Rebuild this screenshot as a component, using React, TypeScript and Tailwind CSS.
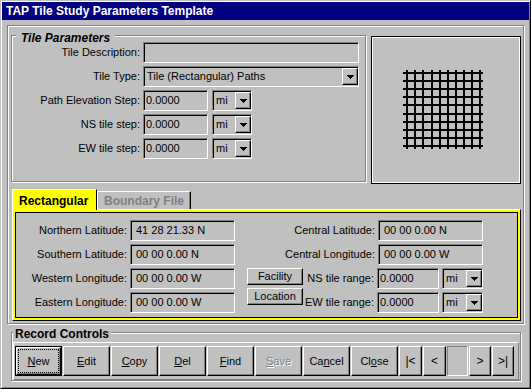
import React from 'react';

const RAISED =
  'border border-t-white border-l-white border-r-black border-b-black shadow-[inset_-1px_-1px_0_#808080]';
const SUNKEN =
  'border border-t-[#808080] border-l-[#808080] border-r-white border-b-white shadow-[inset_1px_1px_0_#000]';
const ETCHED = 'border border-[#808080] shadow-[1px_1px_0_#fff,inset_1px_1px_0_#fff]';

const DropArrow: React.FC = () => (
  <div className={`${RAISED} w-[16px] h-full bg-[#c0c0c0] flex items-center justify-center`}>
    <svg width="7" height="4" viewBox="0 0 7 4" shapeRendering="crispEdges">
      <polygon points="0,0 7,0 3.5,4" fill="#000" />
    </svg>
  </div>
);

const Select: React.FC<{ text: string; className: string }> = ({ text, className }) => (
  <div className={`${SUNKEN} ${className} shrink-0 h-[21px] bg-[#c0c0c0] flex py-[1px]`}>
    <span className="flex-1 pl-[3px] flex items-center whitespace-nowrap">{text}</span>
    <DropArrow />
  </div>
);

const Field: React.FC<{ value?: string; className: string }> = ({ value = '', className }) => (
  <div className={`${SUNKEN} ${className} shrink-0 h-[21px] bg-[#c0c0c0] flex items-center whitespace-nowrap`}>
    {value}
  </div>
);

const Grid: React.FC = () => {
  const xs = [34, 42, 50, 59, 67, 75, 83, 91, 99, 107];
  const ys = [35, 43, 51, 59, 67, 76, 84, 92, 100, 108];
  return (
    <svg width="146" height="145" viewBox="0 0 146 145" shapeRendering="crispEdges">
      {xs.map((x) => (
        <rect key={'v' + x} x={x} y={33} width={2} height={79} fill="#000" />
      ))}
      {ys.map((y) => (
        <rect key={'h' + y} x={31} y={y} width={80} height={2} fill="#000" />
      ))}
    </svg>
  );
};

const TileParameters: React.FC = () => {
  const steps = ['Path Elevation Step:', 'NS tile step:', 'EW tile step:'];
  return (
    <div className={`${ETCHED} relative w-[355px] h-[147px] flex flex-col gap-[3px] pt-[6px]`}>
      <span className="absolute -top-[5px] left-[4px] px-[5px] bg-[#c0c0c0] font-bold italic text-[12px] leading-[14px]">
        Tile Parameters
      </span>
      <div className="flex items-center h-[21px]">
        <span className="w-[128px] text-right whitespace-nowrap">Tile Description:</span>
        <Field className="ml-[3px] w-[216px]" />
      </div>
      <div className="flex items-center h-[21px]">
        <span className="w-[128px] text-right whitespace-nowrap">Tile Type:</span>
        <Select className="ml-[3px] w-[216px]" text="Tile (Rectangular) Paths" />
      </div>
      {steps.map((s) => (
        <div key={s} className="flex items-center h-[21px]">
          <span className="w-[128px] text-right whitespace-nowrap">{s}</span>
          <Field className="ml-[3px] w-[65px] pl-[2px]" value="0.0000" />
          <Select className="ml-[4px] w-[40px]" text="mi" />
        </div>
      ))}
    </div>
  );
};

const LatLon: React.FC = () => {
  const left = [
    ['Northern Latitude:', '41 28 21.33 N'],
    ['Southern Latitude:', '00 00 0.00 N'],
    ['Western Longitude:', '00 00 0.00 W'],
    ['Eastern Longitude:', '00 00 0.00 W'],
  ];
  return (
    <div className="h-full border border-black bg-[#c0c0c0] flex pt-[7px]">
      <div className="w-[219px] shrink-0 flex flex-col gap-[3px]">
        {left.map(([l, v]) => (
          <div key={l} className="flex justify-end items-center h-[21px] gap-[3px] whitespace-nowrap">
            <span>{l}</span>
            <Field className="w-[105px] pl-[5px]" value={v} />
          </div>
        ))}
      </div>
      <div className="ml-[12px] w-[56px] shrink-0 flex flex-col pt-[48px] gap-[3px]">
        <div className={`${RAISED} h-[17px] flex items-center justify-center`}>Facility</div>
        <div className={`${RAISED} h-[17px] flex items-center justify-center`}>Location</div>
      </div>
      <div className="w-[180px] shrink-0 flex flex-col gap-[3px]">
        <div className="flex justify-end items-center h-[21px] gap-[3px] whitespace-nowrap">
          <span>Central Latitude:</span>
          <Field className="w-[105px] pl-[5px]" value="00 00 0.00 N" />
        </div>
        <div className="flex justify-end items-center h-[21px] gap-[3px] whitespace-nowrap">
          <span>Central Longitude:</span>
          <Field className="w-[105px] pl-[5px]" value="00 00 0.00 W" />
        </div>
        {['NS tile range:', 'EW tile range:'].map((l) => (
          <div key={l} className="flex justify-end items-center h-[21px] whitespace-nowrap">
            <span>{l}</span>
            <Field className="ml-[3px] w-[62px] pl-[2px]" value="0.0000" />
            <Select className="ml-[3px] w-[41px]" text="mi" />
          </div>
        ))}
      </div>
    </div>
  );
};

const Btn: React.FC<{ children: React.ReactNode; className?: string }> = ({ children, className = '' }) => (
  <div className={`${RAISED} h-[30px] flex items-center justify-center ${className}`}>{children}</div>
);

export default function App() {
  return (
    <div className="w-[531px] h-[389px] bg-[#c0c0c0] border border-t-[#c0c0c0] border-l-[#c0c0c0] border-r-black border-b-black shadow-[inset_1px_1px_0_#fff,inset_-1px_-1px_0_#808080] p-[1px] font-['Liberation_Sans',Arial,sans-serif] text-[11px] text-black overflow-hidden">
      <div className="h-[18px] bg-[#000080] text-white font-bold text-[12px] pl-[4px] flex items-center">
        TAP Tile Study Parameters Template
      </div>

      <div className={`${ETCHED} ml-[5px] mt-[5px] w-[517px] h-[299px] pt-[9px] pl-[3px]`}>
        <div className="flex h-[149px]">
          <TileParameters />
          <div className="ml-[5px] mt-[1px] w-[150px] h-[148px] border border-black shadow-[inset_1px_1px_0_#fff,inset_-1px_-1px_0_#fff]">
            <Grid />
          </div>
        </div>

        <div className="flex items-end h-[20px] mt-[5px] ml-[1px]">
          <div className="relative z-10 w-[85px] h-[21px] -mb-[1px] bg-[#ffff00] border-t border-l border-r border-t-white border-l-white border-r-black font-bold text-[12px] pl-[6px] pt-[1px] flex items-center">
            Rectangular
          </div>
          <div className="w-[94px] h-[18px] border-t border-l border-r border-t-white border-l-white border-r-black shadow-[inset_-1px_0_0_#808080] text-[#808080] font-bold text-[12px] pl-[6px] pt-[1px] flex items-center">
            Boundary File
          </div>
        </div>
        <div className="ml-[1px] w-[509px] h-[112px] border border-t-white border-l-white border-r-black border-b-black bg-[#ffff00] p-[2px]">
          <LatLon />
        </div>
      </div>

      <div className={`${ETCHED} relative ml-[9px] mt-[8px] w-[510px] h-[49px] pt-[9px] pl-[1px]`}>
        <span className="absolute -top-[6px] left-[1px] px-[2px] bg-[#c0c0c0] font-bold text-[12px] leading-[14px]">
          Record Controls
        </span>
        <div className="w-[506px] h-[38px] border border-t-white border-l-white border-r-[#808080] border-b-[#808080] flex gap-[1px] pl-[1px] pt-[3px]">
          <div className="w-[47px] h-[30px] border border-black">
            <div className={`${RAISED} h-full flex p-[1px]`}>
              <div className="flex-1 border border-dotted border-black flex items-center justify-center">
                <span><u>N</u>ew</span>
              </div>
            </div>
          </div>
          <Btn className="w-[47px]"><span><u>E</u>dit</span></Btn>
          <Btn className="w-[47px]"><span><u>C</u>opy</span></Btn>
          <Btn className="w-[47px]"><span><u>D</u>el</span></Btn>
          <Btn className="w-[47px]"><span><u>F</u>ind</span></Btn>
          <Btn className="w-[47px] text-[#808080] [text-shadow:1px_1px_0_#fff]"><span><u>S</u>ave</span></Btn>
          <Btn className="w-[47px]"><span>Ca<u>n</u>cel</span></Btn>
          <Btn className="w-[47px]"><span>Cl<u>o</u>se</span></Btn>
          <Btn className="w-[23px] text-[12px]">|&lt;</Btn>
          <Btn className="w-[23px] text-[12px]">&lt;</Btn>
          <div className="w-[21px] h-[30px] border border-t-[#808080] border-l-[#808080] border-r-white border-b-white" />
          <Btn className="w-[22px] text-[12px]">&gt;</Btn>
          <Btn className="w-[22px] text-[12px]">&gt;|</Btn>
        </div>
      </div>
    </div>
  );
}
